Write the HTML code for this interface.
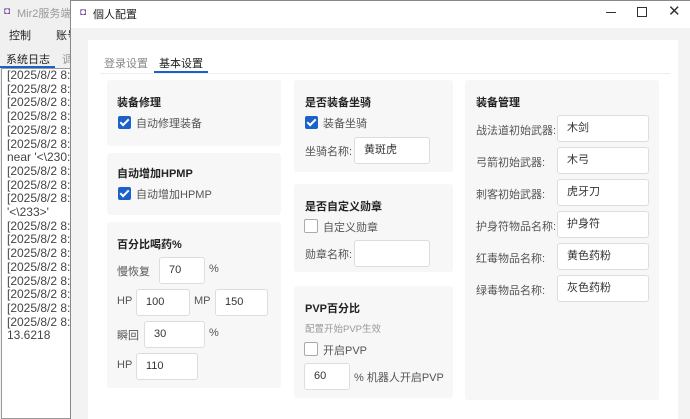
<!DOCTYPE html>
<html><head><meta charset="utf-8"><style>
*{box-sizing:border-box;margin:0;padding:0}
body{width:690px;height:419px;overflow:hidden;position:relative;background:#f3f3f3;font-family:"Liberation Sans","Noto Sans CJK SC",sans-serif;font-size:11px;color:#222}
.a{position:absolute;white-space:nowrap}
.card{position:absolute;background:#f7f7f7;border-radius:3px}
.inp{position:absolute;background:#fff;border:1px solid #ddd;border-radius:3px;height:27px;line-height:25px;padding-left:9px;font-size:11px;color:#333}
.cb{position:absolute;width:13px;height:13px;border-radius:2px;background:#1a62c9}
.cb::after{content:"";position:absolute;left:4px;top:1px;width:3px;height:7px;border:solid #fff;border-width:0 2px 2px 0;transform:rotate(45deg)}
.cbo{position:absolute;width:14px;height:14px;border-radius:2px;background:#fff;border:1px solid #aaa}
.h{font-weight:bold;font-size:11px}
.l{color:#555;font-size:11px}
</style></head><body>
<div class="a" style="left:0;top:0;width:72px;height:419px;background:#f0f0f0"></div>
<div class="a" style="left:4px;top:6px;color:#7a4fa0;font-size:10px">◘</div>
<div class="a" style="left:17px;top:5px;color:#999">Mir2服务端</div>
<div class="a" style="left:9px;top:27px">控制</div>
<div class="a" style="left:56px;top:27px">账号</div>
<div class="a" style="left:6px;top:51px">系统日志</div>
<div class="a" style="left:62px;top:51px;color:#999">调</div>
<div class="a" style="left:0;top:66px;width:55px;height:2px;background:#1a62c9"></div>
<div class="a" style="left:1px;top:68px;width:70px;height:351px;background:#fff;border:1px solid #999"></div>
<div class="a" style="left:7px;top:69px;line-height:13.7px;font-size:12px;color:#444">[2025/8/2 8:<br>[2025/8/2 8:<br>[2025/8/2 8:<br>[2025/8/2 8:<br>[2025/8/2 8:<br>[2025/8/2 8:<br>near '<\230:<br>[2025/8/2 8:<br>[2025/8/2 8:<br>[2025/8/2 8:<br>'<\233>'<br>[2025/8/2 8:<br>[2025/8/2 8:<br>[2025/8/2 8:<br>[2025/8/2 8:<br>[2025/8/2 8:<br>[2025/8/2 8:<br>[2025/8/2 8:<br>[2025/8/2 8:<br>13.6218</div>
<div class="a" style="left:70px;top:0;width:620px;height:419px;background:#f3f3f3;border-left:1px solid #888;border-top:1px solid #888"></div>
<div class="a" style="left:71px;top:1px;width:619px;height:27px;background:#fff"></div>
<div class="a" style="left:80px;top:7px;color:#7a4fa0;font-size:10px">◘</div>
<div class="a" style="left:93px;top:6px">個人配置</div>
<div class="a" style="left:606px;top:12px;width:10px;height:1px;background:#333"></div>
<div class="a" style="left:637px;top:7px;width:10px;height:10px;border:1px solid #333"></div>
<div class="a" style="left:668px;top:2px;font-size:15px;color:#333">✕</div>
<div class="a" style="left:88px;top:40px;width:590px;height:379px;background:#fff"></div>
<div class="a" style="left:104px;top:55px;color:#888">登录设置</div>
<div class="a" style="left:159px;top:55px;color:#222">基本设置</div>
<div class="a" style="left:100px;top:73px;width:570px;height:1px;background:#eee"></div>
<div class="a" style="left:154px;top:71px;width:54px;height:2px;background:#1a62c9"></div>

<div class="card" style="left:107px;top:80px;width:174px;height:66px"></div>
<div class="a h" style="left:117px;top:94px">装备修理</div>
<div class="cb" style="left:118px;top:116px"></div>
<div class="a l" style="left:136px;top:115px">自动修理装备</div>
<div class="card" style="left:107px;top:153px;width:174px;height:62px"></div>
<div class="a h" style="left:117px;top:165px">自动增加HPMP</div>
<div class="cb" style="left:118px;top:187px"></div>
<div class="a l" style="left:136px;top:186px">自动增加HPMP</div>
<div class="card" style="left:107px;top:222px;width:174px;height:166px"></div>
<div class="a h" style="left:117px;top:236px">百分比喝药%</div>
<div class="a l" style="left:117px;top:263px">慢恢复</div>
<div class="inp" style="left:159px;top:257px;width:46px">70</div>
<div class="a l" style="left:209px;top:263px">%</div>
<div class="a l" style="left:117px;top:295px">HP</div>
<div class="inp" style="left:136px;top:289px;width:54px">100</div>
<div class="a l" style="left:194px;top:295px">MP</div>
<div class="inp" style="left:215px;top:289px;width:53px">150</div>
<div class="a l" style="left:117px;top:327px">瞬回</div>
<div class="inp" style="left:144px;top:321px;width:61px">30</div>
<div class="a l" style="left:209px;top:327px">%</div>
<div class="a l" style="left:117px;top:359px">HP</div>
<div class="inp" style="left:136px;top:353px;width:62px">110</div>

<div class="card" style="left:294px;top:80px;width:159px;height:92px"></div>
<div class="a h" style="left:305px;top:94px">是否装备坐骑</div>
<div class="cb" style="left:305px;top:116px"></div>
<div class="a l" style="left:323px;top:115px">装备坐骑</div>
<div class="a l" style="left:305px;top:143px">坐骑名称:</div>
<div class="inp" style="left:354px;top:137px;width:76px">黄斑虎</div>
<div class="card" style="left:294px;top:184px;width:159px;height:88px"></div>
<div class="a h" style="left:305px;top:198px">是否自定义勋章</div>
<div class="cbo" style="left:304px;top:219px"></div>
<div class="a l" style="left:323px;top:219px">自定义勋章</div>
<div class="a l" style="left:305px;top:246px">勋章名称:</div>
<div class="inp" style="left:354px;top:240px;width:76px"></div>
<div class="card" style="left:294px;top:286px;width:159px;height:112px"></div>
<div class="a h" style="left:305px;top:300px">PVP百分比</div>
<div class="a" style="left:305px;top:321px;color:#999;font-size:9.5px">配置开始PVP生效</div>
<div class="cbo" style="left:304px;top:342px"></div>
<div class="a l" style="left:323px;top:342px">开启PVP</div>
<div class="inp" style="left:304px;top:363px;width:46px">60</div>
<div class="a l" style="left:354px;top:369px">% 机器人开启PVP</div>

<div class="card" style="left:465px;top:80px;width:194px;height:320px"></div>
<div class="a h" style="left:476px;top:94px">装备管理</div>
<div class="a l" style="left:476px;top:122px">战法道初始武器:</div>
<div class="inp" style="left:557px;top:115px;width:92px">木剑</div>
<div class="a l" style="left:476px;top:154px">弓箭初始武器:</div>
<div class="inp" style="left:557px;top:147px;width:92px">木弓</div>
<div class="a l" style="left:476px;top:186px">刺客初始武器:</div>
<div class="inp" style="left:557px;top:179px;width:92px">虎牙刀</div>
<div class="a l" style="left:476px;top:218px">护身符物品名称:</div>
<div class="inp" style="left:557px;top:211px;width:92px">护身符</div>
<div class="a l" style="left:476px;top:250px">红毒物品名称:</div>
<div class="inp" style="left:557px;top:243px;width:92px">黄色药粉</div>
<div class="a l" style="left:476px;top:282px">绿毒物品名称:</div>
<div class="inp" style="left:557px;top:275px;width:92px">灰色药粉</div>
</body></html>
